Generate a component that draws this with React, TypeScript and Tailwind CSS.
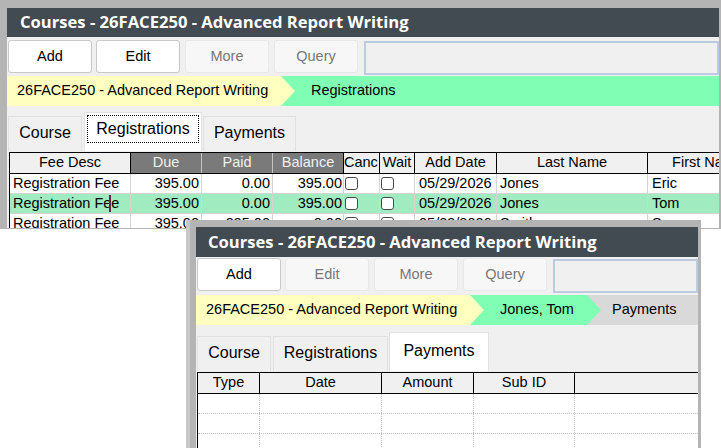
const sans = "font-['Liberation_Sans',Arial,sans-serif]";

type Col = { label: string; w: number; dark?: boolean; align?: "left" | "right"; pad?: string; sep?: string };

const regCols: Col[] = [
  { label: "Fee Desc", w: 121, pad: "pl-[3px]" },
  { label: "Due", w: 71, dark: true, align: "right", pad: "pr-[2px]" },
  { label: "Paid", w: 71, dark: true, align: "right", pad: "pr-[2px]" },
  { label: "Balance", w: 71, dark: true, align: "right", pad: "pr-[1px]", sep: "black" },
  { label: "Canc", w: 36 },
  { label: "Wait", w: 35 },
  { label: "Add Date", w: 82, pad: "pl-[4px]" },
  { label: "Last Name", w: 151, pad: "pl-[3px]" },
  { label: "First Name", w: 120, pad: "pl-[4px]" },
];

const regRows = [
  { fee: "Registration Fee", due: "395.00", paid: "0.00", bal: "395.00", date: "05/29/2026", last: "Jones", first: "Eric" },
  { fee: "Registration Fee", due: "395.00", paid: "0.00", bal: "395.00", date: "05/29/2026", last: "Jones", first: "Tom", on: true },
  { fee: "Registration Fee", due: "395.00", paid: "395.00", bal: "0.00", date: "05/29/2026", last: "Smith", first: "Sue" },
];

function Btn({ label, off }: { label: string; off?: boolean }) {
  return (
    <div
      className={`w-[84px] h-[33px] shrink-0 flex items-center justify-center rounded-[3px] border text-[14.5px] ${
        off ? "bg-[#f7f7f7] border-[#e8e8e8] text-[#777]" : "bg-white border-[#c9c9c9] text-black"
      }`}
    >
      {label}
    </div>
  );
}

function Toolbar({ editOff, top }: { editOff?: boolean; top: string }) {
  return (
    <div className={`h-[38px] flex items-start shrink-0 ${top}`}>
      <div className="ml-[1px]"><Btn label="Add" /></div>
      <div className="ml-[4px]"><Btn label="Edit" off={editOff} /></div>
      <div className="ml-[5px]"><Btn label="More" off /></div>
      <div className="ml-[5px]"><Btn label="Query" off /></div>
      <div className="ml-[6px] flex-1 h-[34px] mt-[1px] border-2 border-[#bccbdf] bg-[#f0f0f0]" />
    </div>
  );
}

const arrow = "[clip-path:polygon(0_0,calc(100%_-_14px)_0,100%_50%,calc(100%_-_14px)_100%,0_100%)]";

function Tab({ label, w, ml, on, focus }: { label: string; w: string; ml: string; on?: boolean; focus?: boolean }) {
  return (
    <div
      className={`${w} ${ml} shrink-0 flex items-center justify-center text-[16px] border border-b-0 ${
        on ? "h-[39px] bg-white border-[#e2e2e2] pb-[3px]" : "h-[35px] bg-[#f0f0f0] border-[#e0e0e0] pb-[2px]"
      }`}
    >
      {focus ? (
        <div className="w-[112px] h-[28px] border border-dotted border-black flex items-center justify-center mt-[-3px]">{label}</div>
      ) : (
        label
      )}
    </div>
  );
}

function Check() {
  return <div className="w-[13px] h-[13px] ml-[1px] rounded-[3px] border border-[#4a4a4a] bg-white" />;
}

export default function App() {
  return (
    <div className={`relative w-[721px] h-[448px] overflow-hidden bg-white text-black ${sans}`}>
      {/* back window */}
      <div className="absolute left-0 top-0 w-[721px] h-[229px] bg-[#b4b4b4] pt-[8px] pl-[7px] pr-[2px] pb-[1px] flex flex-col">
        <div className="flex-1 flex flex-col bg-[#f0f0f0] overflow-hidden">
          <div className="h-[29px] shrink-0 flex items-center bg-[#424a52] text-white font-['Open_Sans',sans-serif] font-bold text-[16.6px] pl-[13px]">
            Courses - 26FACE250 - Advanced Report Writing
          </div>
          <Toolbar top="pt-[3px] h-[39px]" />
          <div className="h-[30px] shrink-0 flex text-[14.5px]">
            <div className={`relative z-[3] w-[288px] shrink-0 bg-[#ffffc0] flex items-center pl-[10px] ${arrow}`}>
              26FACE250 - Advanced Report Writing
            </div>
            <div className="relative z-[2] ml-[-14px] flex-1 bg-[#80ffb4] flex items-center pl-[30px]">Registrations</div>
          </div>
          <div className="h-[46px] shrink-0 flex items-end pb-[1px]">
            <Tab label="Course" w="w-[74px]" ml="ml-[1px]" />
            <Tab label="Registrations" w="w-[118px]" ml="ml-[2px]" on focus />
            <Tab label="Payments" w="w-[93px]" ml="ml-[1px]" />
          </div>
          <div className="ml-[2px] flex-1 bg-white border-l border-t border-black text-[14.5px] overflow-hidden">
            <div className="flex h-[21px] border-b border-black">
              {regCols.map((c) => (
                <div
                  key={c.label}
                  style={{ width: c.w }}
                  className={`shrink-0 overflow-hidden whitespace-nowrap flex items-center border-r ${
                    c.label === "Canc" ? "justify-start" : "justify-center"
                  } ${c.dark ? "bg-[#7a7a7a] text-[#f0f0f0]" : "bg-[#f0f0f0]"} ${
                    c.dark && !c.sep ? "border-[#c4c4c4]" : "border-black"
                  }`}
                >
                  {c.label}
                </div>
              ))}
            </div>
            {regRows.map((r, i) => {
              const vals = [r.fee, r.due, r.paid, r.bal, "", "", r.date, r.last, r.first];
              return (
                <div key={i} className={`flex h-[20px] border-b border-[#d4d4d4] ${r.on ? "bg-[#a0ebc0]" : ""}`}>
                  {regCols.map((c, j) => (
                    <div
                      key={c.label}
                      style={{ width: c.w }}
                      className={`relative shrink-0 overflow-hidden whitespace-nowrap flex items-center border-r border-[#d4d4d4] ${
                        c.align === "right" ? "justify-end" : "justify-start"
                      } ${c.pad ?? ""}`}
                    >
                      {j === 4 || j === 5 ? <Check /> : vals[j]}
                      {r.on && j === 0 && <div className="absolute left-[99px] top-[1px] w-[2px] h-[17px] bg-[#5e2a4c]" />}
                    </div>
                  ))}
                </div>
              );
            })}
          </div>
        </div>
      </div>

      {/* front window */}
      <div className="absolute left-[186px] top-[220px] w-[515px] h-[228px] bg-[#b4b4b4] border-l-[4px] border-[#c8c8c8] pl-[6px] pt-[7px] pr-[3px] flex flex-col">
        <div className="flex-1 flex flex-col bg-[#f0f0f0] overflow-hidden">
          <div className="h-[30px] shrink-0 flex items-center bg-[#424a52] text-white font-['Open_Sans',sans-serif] font-bold text-[16.6px] pl-[12px]">
            Courses - 26FACE250 - Advanced Report Writing
          </div>
          <Toolbar editOff top="pt-[1px]" />
          <div className="h-[30px] shrink-0 flex text-[14.5px]">
            <div className={`relative z-[3] w-[288px] shrink-0 bg-[#ffffc0] flex items-center pl-[10px] ${arrow}`}>
              26FACE250 - Advanced Report Writing
            </div>
            <div className={`relative z-[2] ml-[-14px] w-[131px] shrink-0 bg-[#80ffb4] flex items-center pl-[30px] ${arrow}`}>
              Jones, Tom
            </div>
            <div className="relative z-[1] ml-[-14px] flex-1 bg-[#d9d9d9] flex items-center pl-[25px]">Payments</div>
          </div>
          <div className="h-[47px] shrink-0 flex items-end pb-[1px]">
            <Tab label="Course" w="w-[74px]" ml="ml-[1px]" />
            <Tab label="Registrations" w="w-[115px]" ml="ml-[2px]" />
            <Tab label="Payments" w="w-[100px]" ml="ml-[1px]" on />
          </div>
          <div className="ml-[1px] flex-1 bg-white border-l border-t border-black text-[14.5px] overflow-hidden">
            <div className="flex h-[21px] border-b border-black">
              {[
                ["Type", "w-[62px]"],
                ["Date", "w-[122px]"],
                ["Amount", "w-[92px]"],
                ["Sub ID", "w-[101px]"],
              ].map(([l, w]) => (
                <div key={l} className={`${w} shrink-0 flex items-center justify-center border-r border-black bg-[#f0f0f0]`}>
                  {l}
                </div>
              ))}
              <div className="flex-1 bg-[#f0f0f0]" />
            </div>
            {[0, 1, 2].map((i) => (
              <div key={i} className="flex h-[20px] border-b border-dotted border-[#bdbdbd]">
                {["w-[62px]", "w-[122px]", "w-[92px]", "w-[101px]"].map((w) => (
                  <div key={w} className={`${w} shrink-0 border-r border-dotted border-[#bdbdbd]`} />
                ))}
                <div className="flex-1" />
              </div>
            ))}
          </div>
        </div>
      </div>
    </div>
  );
}
